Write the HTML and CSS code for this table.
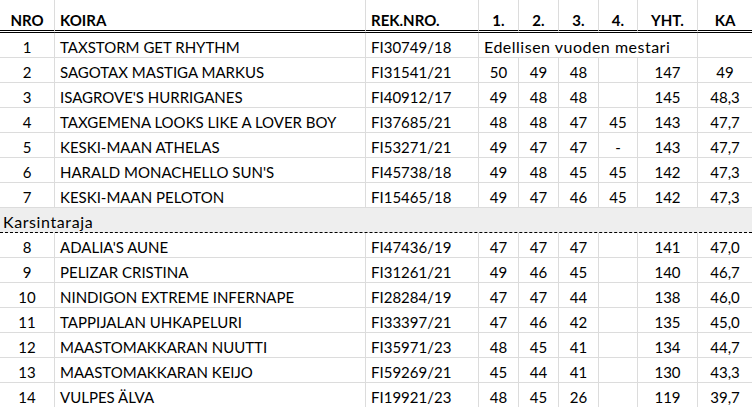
FILE: index.html
```html
<!DOCTYPE html>
<html lang="fi">
<head>
<meta charset="utf-8">
<title>Tulokset</title>
<link rel="stylesheet" href="styles.css">
</head>
<body>
<table class="sheet">
  <colgroup>
    <col class="c-nro"><col class="c-koira"><col class="c-rek"><col class="c-p"><col class="c-p"><col class="c-p"><col class="c-p4"><col class="c-yht"><col class="c-ka">
  </colgroup>
  <thead>
    <tr class="head">
      <th class="ctr">NRO</th>
      <th class="lft">KOIRA</th>
      <th class="lft">REK.NRO.</th>
      <th class="ctr">1.</th>
      <th class="ctr">2.</th>
      <th class="ctr">3.</th>
      <th class="ctr">4.</th>
      <th class="ctr">YHT.</th>
      <th class="ctr last">KA</th>
    </tr>
  </thead>
  <tbody>
    <tr>
      <td class="ctr">1</td><td class="lft">TAXSTORM GET RHYTHM</td><td class="lft">FI30749/18</td>
      <td class="lft note" colspan="5">Edellisen vuoden mestari</td><td class="last"></td>
    </tr>
    <tr><td class="ctr">2</td><td class="lft">SAGOTAX MASTIGA MARKUS</td><td class="lft">FI31541/21</td><td class="ctr">50</td><td class="ctr">49</td><td class="ctr">48</td><td class="ctr"></td><td class="ctr">147</td><td class="ctr last">49</td></tr>
    <tr><td class="ctr">3</td><td class="lft">ISAGROVE'S HURRIGANES</td><td class="lft">FI40912/17</td><td class="ctr">49</td><td class="ctr">48</td><td class="ctr">48</td><td class="ctr"></td><td class="ctr">145</td><td class="ctr last">48,3</td></tr>
    <tr><td class="ctr">4</td><td class="lft">TAXGEMENA LOOKS LIKE A LOVER BOY</td><td class="lft">FI37685/21</td><td class="ctr">48</td><td class="ctr">48</td><td class="ctr">47</td><td class="ctr">45</td><td class="ctr">143</td><td class="ctr last">47,7</td></tr>
    <tr><td class="ctr">5</td><td class="lft">KESKI-MAAN ATHELAS</td><td class="lft">FI53271/21</td><td class="ctr">49</td><td class="ctr">47</td><td class="ctr">47</td><td class="ctr">-</td><td class="ctr">143</td><td class="ctr last">47,7</td></tr>
    <tr><td class="ctr">6</td><td class="lft">HARALD MONACHELLO SUN'S</td><td class="lft">FI45738/18</td><td class="ctr">49</td><td class="ctr">48</td><td class="ctr">45</td><td class="ctr">45</td><td class="ctr">142</td><td class="ctr last">47,3</td></tr>
    <tr><td class="ctr">7</td><td class="lft">KESKI-MAAN PELOTON</td><td class="lft">FI15465/18</td><td class="ctr">49</td><td class="ctr">47</td><td class="ctr">46</td><td class="ctr">45</td><td class="ctr">142</td><td class="ctr last">47,3</td></tr>
    <tr class="cut"><td colspan="9">Karsintaraja</td></tr>
    <tr><td class="ctr">8</td><td class="lft">ADALIA'S AUNE</td><td class="lft">FI47436/19</td><td class="ctr">47</td><td class="ctr">47</td><td class="ctr">47</td><td class="ctr"></td><td class="ctr">141</td><td class="ctr last">47,0</td></tr>
    <tr><td class="ctr">9</td><td class="lft">PELIZAR CRISTINA</td><td class="lft">FI31261/21</td><td class="ctr">49</td><td class="ctr">46</td><td class="ctr">45</td><td class="ctr"></td><td class="ctr">140</td><td class="ctr last">46,7</td></tr>
    <tr><td class="ctr">10</td><td class="lft">NINDIGON EXTREME INFERNAPE</td><td class="lft">FI28284/19</td><td class="ctr">47</td><td class="ctr">47</td><td class="ctr">44</td><td class="ctr"></td><td class="ctr">138</td><td class="ctr last">46,0</td></tr>
    <tr><td class="ctr">11</td><td class="lft">TAPPIJALAN UHKAPELURI</td><td class="lft">FI33397/21</td><td class="ctr">47</td><td class="ctr">46</td><td class="ctr">42</td><td class="ctr"></td><td class="ctr">135</td><td class="ctr last">45,0</td></tr>
    <tr><td class="ctr">12</td><td class="lft">MAASTOMAKKARAN NUUTTI</td><td class="lft">FI35971/23</td><td class="ctr">48</td><td class="ctr">45</td><td class="ctr">41</td><td class="ctr"></td><td class="ctr">134</td><td class="ctr last">44,7</td></tr>
    <tr><td class="ctr">13</td><td class="lft">MAASTOMAKKARAN KEIJO</td><td class="lft">FI59269/21</td><td class="ctr">45</td><td class="ctr">44</td><td class="ctr">41</td><td class="ctr"></td><td class="ctr">130</td><td class="ctr last">43,3</td></tr>
    <tr><td class="ctr">14</td><td class="lft">VULPES ÄLVA</td><td class="lft">FI19921/23</td><td class="ctr">48</td><td class="ctr">45</td><td class="ctr">26</td><td class="ctr"></td><td class="ctr">119</td><td class="ctr last">39,7</td></tr>
  </tbody>
</table>
</body>
</html>
```

FILE: styles.css
```css
html, body {
  margin: 0;
  padding: 0;
  background: #ffffff;
}

.sheet {
  border-collapse: separate;
  border-spacing: 0;
  table-layout: fixed;
  width: 752px;
  font-family: Lato, "Open Sans", sans-serif;
  font-size: 15px;
  color: #000;
}

.c-nro { width: 55px; }
.c-koira { width: 311px; }
.c-rek { width: 113px; }
.c-p { width: 40px; }
.c-p4 { width: 39px; }
.c-yht { width: 60px; }
.c-ka { width: 54px; }

.sheet th,
.sheet td {
  box-sizing: border-box;
  padding: 0 4px;
  height: 25px;
  line-height: 20px;
  vertical-align: bottom;
  border-right: 1px solid #dcdcdc;
  border-bottom: 1px solid #dcdcdc;
  white-space: nowrap;
  overflow: hidden;
}

.sheet th {
  height: 33px;
  font-weight: 700;
  border-bottom: 3px double #000;
  padding-bottom: 0;
}

.sheet .last { border-right: none; }

.ctr { text-align: center; }
.lft { text-align: left; }
.sheet td.lft, .sheet th.lft { padding-left: 5px; }

.sheet td.note {
  font-size: 16px;
  letter-spacing: 0.5px;
}

.cut td {
  background: #eeeeee;
  border-right: none;
  border-bottom: 1px dashed #000;
  padding-left: 3px;
  text-align: left;
  font-size: 16px;
  letter-spacing: 0.6px;
}
```
